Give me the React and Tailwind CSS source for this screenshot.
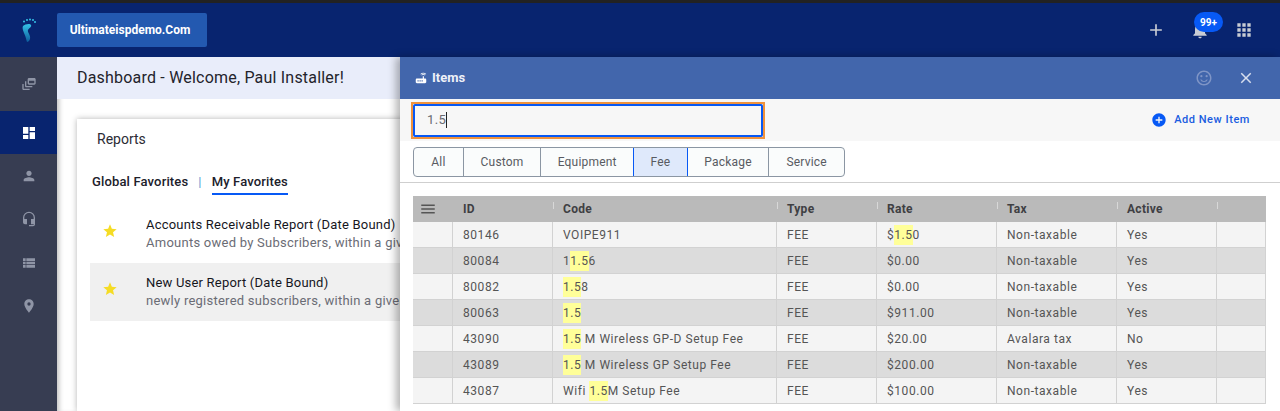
import {
  MdDynamicFeed, MdDashboard, MdPerson, MdHeadsetMic, MdViewList, MdPlace, MdStar, MdAdd, MdNotifications,
  MdApps, MdClose, MdAddCircle, MdRouter, MdOutlineSentimentSatisfiedAlt, MdMenu,
} from "react-icons/md";

const sideItems = [
  { icon: MdDynamicFeed, h: "h-[54px]" },
  { icon: MdDashboard, h: "h-[43px]", active: true },
  { icon: MdPerson, h: "h-[43px]" },
  { icon: MdHeadsetMic, h: "h-[44px]" },
  { icon: MdViewList, h: "h-[43px]" },
  { icon: MdPlace, h: "h-[43px]" },
];

const tabs = [
  { label: "All", w: "w-[50px]" },
  { label: "Custom", w: "w-[78px]" },
  { label: "Equipment", w: "w-[93px]" },
  { label: "Fee", w: "w-[55px]", active: true },
  { label: "Package", w: "w-[82px]" },
  { label: "Service", w: "w-[75px]" },
];

const cols = ["ID", "Code", "Type", "Rate", "Tax", "Active"];

const rows = [
  ["80146", "VOIPE911", "FEE", "$1.50", "Non-taxable", "Yes"],
  ["80084", "11.56", "FEE", "$0.00", "Non-taxable", "Yes"],
  ["80082", "1.58", "FEE", "$0.00", "Non-taxable", "Yes"],
  ["80063", "1.5", "FEE", "$911.00", "Non-taxable", "Yes"],
  ["43090", "1.5 M Wireless GP-D Setup Fee", "FEE", "$20.00", "Avalara tax", "No"],
  ["43089", "1.5 M Wireless GP Setup Fee", "FEE", "$200.00", "Non-taxable", "Yes"],
  ["43087", "Wifi 1.5M Setup Fee", "FEE", "$100.00", "Non-taxable", "Yes"],
];

const gridCols = "grid grid-cols-[39px_100px_224px_100px_120px_120px_100px_50px]";

function Marked({ text }) {
  const i = text.indexOf("1.5");
  if (i < 0) return text;
  return (
    <>
      {text.slice(0, i)}
      <span className="bg-[#ffff99] py-px">1.5</span>
      {text.slice(i + 3)}
    </>
  );
}

function Logo() {
  return (
    <svg width="16" height="26" viewBox="0 0 16 26">
      <defs>
        <linearGradient id="foot" x1="0" y1="0" x2="0" y2="1">
          <stop offset="0" stopColor="#35c3e8" />
          <stop offset="1" stopColor="#0d5c9c" />
        </linearGradient>
      </defs>
      <path d="M2 8c2-2 7-3 8-1 1 2-2 3-3 5-1 2 3 5 2 9-.5 2-2 3-3 3-1-3-1-5-3-9C2 12 1 10 2 8z" fill="url(#foot)" />
      <circle cx="3" cy="3.5" r="1" fill="#35c3e8" />
      <circle cx="6" cy="2" r="1" fill="#35c3e8" />
      <circle cx="9" cy="1.5" r="1" fill="#35c3e8" />
      <circle cx="12" cy="2" r="1" fill="#35c3e8" />
      <circle cx="14" cy="4" r="1" fill="#35c3e8" />
    </svg>
  );
}

function Report({ title, desc, shaded }) {
  return (
    <div className={`flex h-[58px] pl-[12px] items-center overflow-hidden ${shaded ? "bg-[#f0f0f0]" : ""}`}>
      <MdStar className="text-[#f5dc24] shrink-0 -mt-[5px]" size={16} />
      <div className="ml-[28px] min-w-0 overflow-hidden">
        <div className="text-[13px] leading-[18px] text-[#16161d] tracking-[0.2px] whitespace-nowrap">{title}</div>
        <div className="text-[13px] leading-[18px] text-[#6b6c75] tracking-[0.25px] whitespace-nowrap">{desc}</div>
      </div>
    </div>
  );
}

export default function App() {
  return (
    <div className="relative h-[411px] w-[1280px] overflow-hidden flex flex-col bg-white [font-family:Roboto,sans-serif]">
      <div className="h-[3px] bg-[#222222] shrink-0" />
      <header className="h-[54px] shrink-0 bg-[#08246f] flex items-center">
        <div className="w-[57px] flex justify-center pt-[1px]">
          <Logo />
        </div>
        <div className="w-[150px] h-[34px] rounded-[2px] bg-[#2359b0] text-white text-[12px] font-bold flex items-center justify-center pr-[4px]">
          Ultimateispdemo.Com
        </div>
        <div className="ml-auto flex items-center pr-[26px] text-[#c8ccd4]">
          <MdAdd size={20} />
          <div className="relative ml-[24px] w-[20px] flex justify-center">
            <MdNotifications size={20} />
            <span className="absolute -top-[8px] left-[4px] w-[29px] h-[20px] rounded-full bg-[#0759f5] text-white text-[10px] font-bold flex items-center justify-center">
              99+
            </span>
          </div>
          <MdApps className="ml-[24px]" size={20} />
        </div>
      </header>

      <div className="flex-1 flex min-h-0">
        <aside className="w-[57px] shrink-0 bg-[#373d52] flex flex-col">
          {sideItems.map(({ icon: Icon, h, active }, i) => (
            <div
              key={i}
              className={`${h} flex items-center justify-center ${active ? "bg-[#08246f] text-white" : "text-[#8f95a6]"}`}
            >
              <Icon size={16} />
            </div>
          ))}
        </aside>

        <main className="flex-1 min-w-0 flex flex-col shadow-[inset_5px_0_5px_-3px_rgba(0,0,0,0.25)]">
          <div className="h-[42px] shrink-0 bg-[#e9edfa] pl-[20px] flex items-center text-[16px] text-[#23232b] tracking-[0.2px]">
            Dashboard - Welcome, Paul Installer!
          </div>
          <div className="ml-[20px] mt-[20px] flex-1 bg-white shadow-[0_0_6px_rgba(0,0,0,0.3)] pl-[13px]">
            <div className="pl-[7px] pt-[11px] text-[14px] leading-[18px] text-[#2c2c35]">Reports</div>
            <div className="flex items-center mt-[24px] pl-[2px] text-[13px] font-medium text-[#20202a] tracking-[0.15px]">
              <span>Global Favorites</span>
              <span className="mx-[10px] font-normal text-[#5b9bd5]">|</span>
              <span className="border-b-2 border-[#0759f5] pb-[1px] -mb-[3px]">My Favorites</span>
            </div>
            <div className="mt-[13px] w-[310px]">
              <Report title="Accounts Receivable Report (Date Bound)" desc="Amounts owed by Subscribers, within a given date range" />
              <Report title="New User Report (Date Bound)" desc="newly registered subscribers, within a given date range" shaded />
            </div>
          </div>
        </main>
      </div>

      {/* items panel lies over the dashboard */}
      <section className="absolute left-[400px] right-0 top-[57px] bottom-0 bg-white shadow-[-4px_0_8px_rgba(0,0,0,0.3)] flex flex-col">
        <div className="h-[42px] shrink-0 bg-[#4266ac] flex items-center pl-[14px] pr-[25px] text-white">
          <MdRouter size={14} />
          <span className="ml-[4px] text-[13px] font-bold text-[#eef1f8]">Items</span>
          <MdOutlineSentimentSatisfiedAlt className="ml-auto text-[#7f95c6]" size={18} />
          <MdClose className="ml-[24px] text-[#d7deee]" size={18} />
        </div>

        <div className="h-[42px] shrink-0 bg-[#f7f7f7] flex items-center pl-[11px] pr-[30px]">
          <div className="w-[354px] h-[37px] border-[2px] border-[#f0923c] bg-[#f7f7f7]">
            <div className="w-full h-full border-[2px] border-[#0759f5] rounded-[2px] flex items-center pl-[12px] text-[13px] tracking-[0.4px] text-[#6a6b72]">
              1.5
              <span className="w-px h-[16px] bg-[#222222]" />
            </div>
          </div>
          <div className="ml-auto flex items-center text-[#1a5ce0] text-[11px] font-medium tracking-[0.55px]">
            <MdAddCircle size={16} className="text-[#0759f5]" />
            <span className="ml-[7px]">Add New Item</span>
          </div>
        </div>

        <div className="shrink-0 h-[42px] border-b border-[#cfcfcf] pl-[13px] pt-[6px]">
          <div className="flex h-[30px] w-[432px] rounded-[4px] border border-[#8b96a3] bg-[#fafcfc] overflow-hidden">
            {tabs.map((t) => (
              <div
                key={t.label}
                className={`${t.w} flex items-center justify-center text-[12px] tracking-[0.2px] text-[#585b62] ${
                  t.active ? "bg-[#dfe9fb] border border-[#0759f5] -my-px -ml-px" : "border-r border-[#8b96a3] last:border-r-0"
                }`}
              >
                {t.label}
              </div>
            ))}
          </div>
        </div>

        <div className="mt-[13px] ml-[13px] w-[853px]">
          <div className={`${gridCols} h-[26px] bg-[#bababa] text-[12px] font-bold text-[#3f3f43] tracking-[0.3px]`}>
            <div className="flex items-center pl-[6px] text-[#555555]">
              <MdMenu size={18} />
            </div>
            {cols.map((c) => (
              <div key={c} className="relative flex items-center pl-[11px]">
                {c}
                <span className="absolute -right-[2px] top-[6px] w-px h-[7px] bg-[#d8d8d8]" />
              </div>
            ))}
            <div />
          </div>
          {rows.map((r, i) => (
            <div
              key={r[0]}
              className={`${gridCols} h-[26px] border-b border-[#d2d2d2] text-[12px] text-[#555555] tracking-[0.55px] ${
                i % 2 ? "bg-[#dcdcdc]" : "bg-[#f4f4f4]"
              }`}
            >
              <div />
              {r.map((v, j) => (
                <div key={j} className="border-l border-[#d2d2d2] flex items-center pl-[10px] whitespace-pre">
                  <Marked text={v} />
                </div>
              ))}
              <div className="border-x border-[#d2d2d2]" />
            </div>
          ))}
        </div>
      </section>
    </div>
  );
}
